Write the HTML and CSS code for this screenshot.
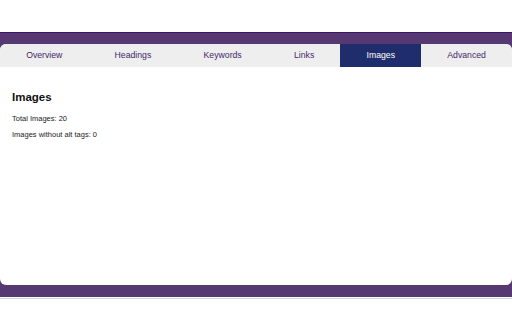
FILE: index.html
```html
<!DOCTYPE html>
<html>
<head>
<meta charset="utf-8">
<link rel="stylesheet" href="styles.css">
</head>
<body>
<div class="top"></div>
<div class="frame">
  <div class="card">
    <nav class="tabs">
      <div class="tab">Overview</div>
      <div class="tab">Headings</div>
      <div class="tab">Keywords</div>
      <div class="tab">Links</div>
      <div class="tab active">Images</div>
      <div class="tab">Advanced</div>
    </nav>
    <section class="content">
      <h2 class="title">Images</h2>
      <p class="line">Total Images: 20</p>
      <p class="line">Images without alt tags: 0</p>
    </section>
  </div>
</div>
<div class="under"></div>
</body>
</html>
```
FILE: styles.css
```css
html, body {
  margin: 0;
  padding: 0;
  background: #ffffff;
  font-family: "Liberation Sans", Arial, sans-serif;
}
.top {
  height: 32px;
}
.frame {
  background: #563872;
  border-top: 1px solid #3a1668;
  padding: 11px 0 12px 0;
}
.card {
  background: #ffffff;
  border-radius: 6px;
  height: 241px;
  overflow: hidden;
}
.tabs {
  display: flex;
  background: #eeeeee;
  height: 23px;
}
.tab {
  flex: 1 1 auto;
  text-align: center;
  font-size: 8.7px;
  line-height: 23px;
  color: #44286c;
}
.tab.active {
  background: #1f2d6c;
  color: #ffffff;
}
.content {
  padding: 23px 12px;
}
.title {
  margin: 0 0 10px 0;
  font-size: 11.5px;
  line-height: 14px;
  font-weight: bold;
  color: #111111;
}
.line {
  margin: 0 0 6px 0;
  font-size: 7.5px;
  line-height: 10px;
  color: #222222;
}
.under {
  height: 1px;
  background: #d8d4de;
  margin-top: 1px;
}
```
